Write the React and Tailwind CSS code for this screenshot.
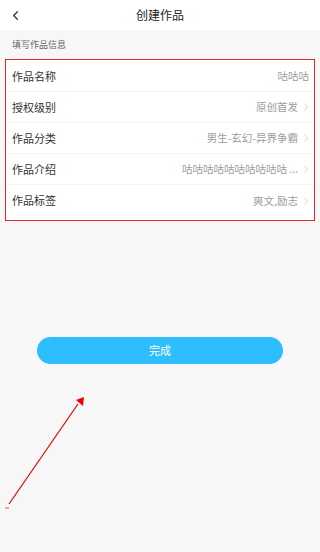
import { ChevronLeft } from 'lucide-react';

const rows = [
  { label: '作品名称', value: '咕咕咕', arrow: false },
  { label: '授权级别', value: '原创首发', arrow: true },
  { label: '作品分类', value: '男生-玄幻-异界争霸', arrow: true },
  { label: '作品介绍', value: '咕咕咕咕咕咕咕咕咕咕 ...', arrow: true },
  { label: '作品标签', value: '爽文,励志', arrow: true },
];

const App = () => {
  return (
    <div
      className="relative w-[320px] h-[552px] bg-[#f7f7f8] overflow-hidden"
      style={{ fontFamily: '"Noto Sans CJK SC", "Noto Sans", sans-serif' }}
    >
      <div className="h-[30px] bg-white flex items-center relative">
        <ChevronLeft className="absolute left-[8px] w-[15px] h-[15px] text-[#333]" strokeWidth={2} />
        <p className="w-full text-center text-[12px] text-[#222]">创建作品</p>
      </div>
      <div className="h-[29px] flex items-center px-[12px]">
        <p className="text-[9px] text-[#666]">填写作品信息</p>
      </div>
      <div className="mx-[5px] border border-[#e4262b] bg-white pt-[1px] pb-[4px]">
        {rows.map((row, i) => (
          <div
            key={row.label}
            className={`h-[31px] flex items-center justify-between pl-[6px] pr-[5px] ${i < rows.length - 1 ? 'border-b border-[#f3f3f3]' : ''}`}
          >
            <span className="text-[11px] text-[#333]">{row.label}</span>
            <span className="flex items-center text-[10.5px] text-[#9c9c9c]">
              {row.value}
              {row.arrow && (
                <svg className="ml-[6px] mr-[1px]" width="4" height="8" viewBox="0 0 4 8">
                  <path d="M0.5 0.5 L3.5 4 L0.5 7.5" fill="none" stroke="#cfcfcf" strokeWidth="0.9" />
                </svg>
              )}
            </span>
          </div>
        ))}
      </div>
      <div className="mt-[116px] mx-[37px]">
        <button className="w-full h-[27px] rounded-full bg-[#2fbefd] text-white text-[11px] flex items-center justify-center">
          完成
        </button>
      </div>
      <svg className="absolute left-0 top-0" width="320" height="552" viewBox="0 0 320 552">
        <line x1="9" y1="504" x2="78" y2="404" stroke="#e01010" strokeWidth="1.3" />
        <polygon points="84,397 76,400 83,406" fill="#f00000" />
        <line x1="5" y1="508" x2="9" y2="508" stroke="#e05050" strokeWidth="1" />
      </svg>
    </div>
  );
};

export default App;
